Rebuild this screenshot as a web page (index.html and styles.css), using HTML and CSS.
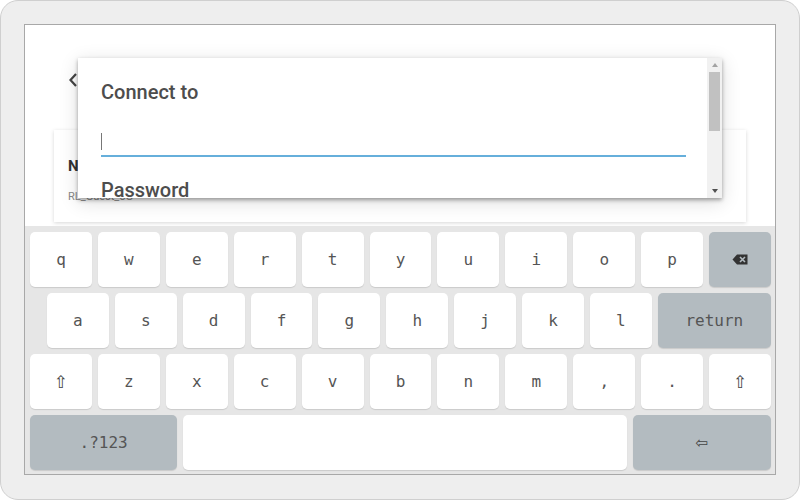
FILE: index.html
```html
<!DOCTYPE html>
<html lang="en">
<head>
  <meta charset="UTF-8" />
  <meta name="viewport" content="width=device-width, initial-scale=1.0" />
  <title>Connect to network</title>
  <link rel="stylesheet" href="styles.css">
</head>
<body>
  <div class="device">
    <div class="screen">

      <div class="app">
        <div class="app-header">
          <svg class="back" width="10" height="16" viewBox="0 0 10 16">
            <path d="M8 2 L2.5 8 L8 14" fill="none" stroke="#444" stroke-width="2.2" />
          </svg>
        </div>
        <div class="card">
          <div class="card-title">Network</div>
          <div class="card-sub">RL_Guest_5G</div>
        </div>
      </div>

      <div class="dialog">
        <div class="dialog-body">
          <div class="dialog-label">Connect to</div>
          <div class="field focused"><span class="caret"></span></div>
          <div class="dialog-label">Password</div>
          <div class="field"></div>
          <div class="dialog-actions">
            <span>CANCEL</span>
            <span>CONNECT</span>
          </div>
        </div>
        <div class="scrollbar">
          <div class="sb-btn"><span class="arrow up"></span></div>
          <div class="sb-track"><div class="sb-thumb"></div></div>
          <div class="sb-btn"><span class="arrow down"></span></div>
        </div>
      </div>

      <div class="keyboard">
        <div class="kb-row">
          <div class="key">q</div>
          <div class="key">w</div>
          <div class="key">e</div>
          <div class="key">r</div>
          <div class="key">t</div>
          <div class="key">y</div>
          <div class="key">u</div>
          <div class="key">i</div>
          <div class="key">o</div>
          <div class="key">p</div>
          <div class="key dark">
            <svg width="16" height="11" viewBox="0 0 16 11">
              <path d="M5 0.5 H15.5 V10.5 H5 L0.5 5.5 Z" fill="#333" />
              <path d="M8 3 L13 8 M13 3 L8 8" stroke="#b3bbc0" stroke-width="1.6" />
            </svg>
          </div>
        </div>
        <div class="kb-row offset">
          <div class="key">a</div>
          <div class="key">s</div>
          <div class="key">d</div>
          <div class="key">f</div>
          <div class="key">g</div>
          <div class="key">h</div>
          <div class="key">j</div>
          <div class="key">k</div>
          <div class="key">l</div>
          <div class="key dark return">return</div>
        </div>
        <div class="kb-row">
          <div class="key glyph">⇧</div>
          <div class="key">z</div>
          <div class="key">x</div>
          <div class="key">c</div>
          <div class="key">v</div>
          <div class="key">b</div>
          <div class="key">n</div>
          <div class="key">m</div>
          <div class="key">,</div>
          <div class="key">.</div>
          <div class="key glyph">⇧</div>
        </div>
        <div class="kb-row">
          <div class="key dark symbols">.?123</div>
          <div class="key space"></div>
          <div class="key dark enter glyph">⇦</div>
        </div>
      </div>

    </div>
  </div>
</body>
</html>
```

FILE: styles.css
```css
body {
  margin: 0;
  background-color: #ffffff;
  font-family: Roboto, "Noto Sans", sans-serif;
}

.device {
  width: 800px;
  height: 500px;
  box-sizing: border-box;
  padding: 23px 23px 24px 23px;
  background-color: #eeeeee;
  border: 1px solid #cfcfcf;
  border-radius: 18px;
}

.screen {
  position: relative;
  height: 100%;
  box-sizing: border-box;
  display: flex;
  flex-direction: column;
  background-color: #ffffff;
  border: 1px solid #a8a8a8;
}

/* page behind the dialog */
.app {
  height: 201px;
  flex: 0 0 auto;
  overflow: hidden;
}

.app-header {
  height: 105px;
  padding: 47px 0 0 43px;
  box-sizing: border-box;
}

.back {
  display: block;
}

.card {
  height: 92px;
  margin: 0 29px;
  padding: 27px 14px 0 14px;
  box-sizing: border-box;
  background-color: #ffffff;
  box-shadow: 0 1px 4px rgba(0, 0, 0, 0.16);
}

.card-title {
  font-size: 15px;
  font-weight: bold;
  color: #333333;
}

.card-sub {
  margin-top: 15px;
  font-size: 11px;
  color: #888888;
}

/* dialog */
.dialog {
  position: absolute;
  left: 53px;
  top: 33px;
  width: 644px;
  height: 140px;
  display: flex;
  background-color: #ffffff;
  box-shadow: 0 2px 4px rgba(0, 0, 0, 0.35), 0 4px 18px rgba(0, 0, 0, 0.14);
}

.dialog-body {
  flex: 1;
  overflow: hidden;
  padding: 22px 21px 0 23px;
}

.dialog-label {
  font-size: 20px;
  line-height: 24px;
  font-weight: 500;
  color: #4d4d4d;
}

.field {
  height: 29px;
  margin: 24px 0 21px 0;
  padding-top: 5px;
  box-sizing: border-box;
  border-bottom: 2px solid #d0d0d0;
}

.field.focused {
  border-bottom-color: #66afdb;
}

.caret {
  display: block;
  width: 1px;
  height: 17px;
  background-color: #777777;
}

.dialog-actions {
  display: flex;
  justify-content: flex-end;
  gap: 24px;
  padding: 10px 0 40px 0;
  font-size: 14px;
  font-weight: 500;
  color: #1e88c7;
}

.scrollbar {
  width: 15px;
  display: flex;
  flex-direction: column;
  background-color: #f1f1f1;
}

.sb-btn {
  height: 14px;
  display: flex;
  align-items: center;
  justify-content: center;
}

.sb-track {
  flex: 1;
}

.sb-thumb {
  height: 59px;
  margin: 0 2px;
  background-color: #c1c1c1;
}

.arrow {
  width: 0;
  height: 0;
  border-left: 3.5px solid transparent;
  border-right: 3.5px solid transparent;
}

.arrow.up {
  border-bottom: 4px solid #a3a3a3;
}

.arrow.down {
  border-top: 4px solid #505050;
}

/* keyboard */
.keyboard {
  flex: 1;
  display: flex;
  flex-direction: column;
  gap: 6px;
  padding: 6px 4px 4px 5px;
  background-color: #e6e6e6;
}

.kb-row {
  height: 55px;
  display: flex;
  gap: 6px;
}

.kb-row.offset {
  padding-left: 17px;
}

.key {
  flex: 1 1 0;
  display: flex;
  align-items: center;
  justify-content: center;
  background-color: #ffffff;
  border-radius: 5px;
  box-shadow: 0 1px 1px rgba(0, 0, 0, 0.12);
  font-family: "DejaVu Sans Mono", "Liberation Mono", monospace;
  font-size: 16px;
  color: #555555;
}

.key.dark {
  background-color: #b3bbc0;
}

.key.glyph {
  font-family: "DejaVu Sans", sans-serif;
  font-size: 17px;
  color: #444444;
}

.key.return {
  flex-grow: 1.83;
}

.key.symbols {
  flex-grow: 147;
}

.key.space {
  flex-grow: 443;
}

.key.enter {
  flex-grow: 138;
  font-size: 15px;
}
```
